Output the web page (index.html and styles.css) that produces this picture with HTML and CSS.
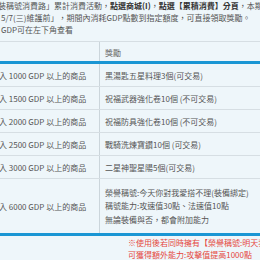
FILE: index.html
```html
<!DOCTYPE html>
<html>
<head>
<meta charset="utf-8">
<link rel="stylesheet" href="styles.css">
</head>
<body>
<div class="page">
  <div class="intro">
    <p class="line first">服裝稱號消費路」累計消費活動，<b>點選商城(I)</b>，<b>點選【累積消費】分頁</b>，本期</p>
    <p class="line">5/7(三)維護前」，期間內消耗GDP點數到指定額度，可直接領取獎勵。</p>
    <p class="line">GDP可在左下角查看</p>
  </div>
  <div class="rewards">
    <div class="row head"><div class="c1"></div><div class="c2">獎勵</div></div>
    <div class="row"><div class="c1">購入 1000 GDP 以上的商品</div><div class="c2">黑湯匙五星料理3個(可交易)</div></div>
    <div class="row"><div class="c1">購入 1500 GDP 以上的商品</div><div class="c2">祝福武器強化卷10個 (不可交易)</div></div>
    <div class="row"><div class="c1">購入 2000 GDP 以上的商品</div><div class="c2">祝福防具強化卷10個 (不可交易)</div></div>
    <div class="row"><div class="c1">購入 2500 GDP 以上的商品</div><div class="c2">戰騎洗煉寶鑽10個 (可交易)</div></div>
    <div class="row"><div class="c1">購入 3000 GDP 以上的商品</div><div class="c2">二星神聖星陽5個(可交易)</div></div>
    <div class="row tall"><div class="c1">購入 6000 GDP 以上的商品</div><div class="c2 multi"><span>榮譽稱號:今天你對我愛搭不理(裝備綁定)</span><span>稱號能力:攻速值30點、法速值10點</span><span>無論裝備與否，都會附加能力</span></div></div>
  </div>
  <div class="note">
    <p>※使用後若同時擁有【榮譽稱號:明天我讓你高攀不起】</p>
    <p>可獲得額外能力:攻擊值提高1000點</p>
  </div>
</div>
</body>
</html>
```
FILE: styles.css
```css
html, body {
  margin: 0;
  padding: 0;
  background: #eef6fa;
  overflow: hidden;
}
.page {
  width: 260px;
  font-family: "Noto Sans CJK TC", "Noto Sans", sans-serif;
  font-size: 8px;
  color: #555;
}
.intro {
  padding-left: 1px;
}
.line {
  margin: 0;
  height: 12px;
  line-height: 12px;
  white-space: nowrap;
}
.line.first {
  margin-left: -11px;
}
.line b {
  color: #333;
}
.rewards {
  margin-top: 5px;
  margin-left: -13px;
  width: 420px;
}
.row {
  display: grid;
  grid-template-columns: 113px 1fr;
  height: 22px;
  border-bottom: 1px solid #d6dee3;
  white-space: nowrap;
}
.row > div {
  display: flex;
  align-items: center;
}
.c1 {
  padding-left: 4px;
  border-right: 1px solid #cbd5db;
}
.c2 {
  padding-left: 5px;
}
.row.head {
  height: 19px;
  border-top: 1px solid #d6dee3;
  border-bottom: 3px solid #1a96d4;
  color: #666;
}
.row.head .c2 {
  padding-top: 2px;
}
.row.tall {
  height: 54px;
  border-bottom: 3px solid #1a96d4;
}
.c2.multi {
  flex-direction: column;
  align-items: flex-start;
  justify-content: center;
  line-height: 13.5px;
}
.note {
  padding-left: 128px;
  padding-top: 1px;
  color: #e5473d;
}
.note p {
  margin: 0;
  line-height: 12px;
  white-space: nowrap;
}
```
